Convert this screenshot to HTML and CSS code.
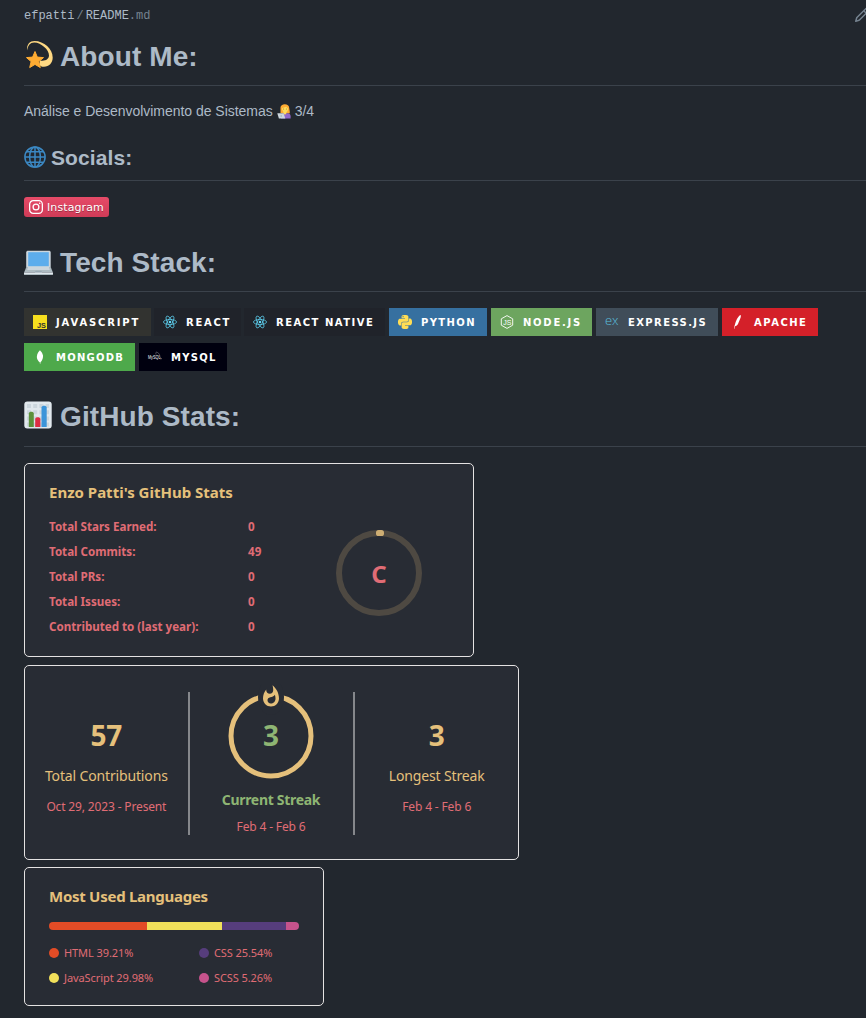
FILE: index.html
```html
<!DOCTYPE html>
<html lang="pt-BR">
<head>
<meta charset="utf-8">
<title>efpatti/README.md</title>
<link rel="stylesheet" href="styles.css">
</head>
<body>
<main class="readme">
  <header class="file-bar">
    <div class="file-path"><span>efpatti</span><span class="slash">/</span><span>README</span><span class="ext">.md</span></div>
    <svg class="edit-icon" width="16" height="16" viewBox="0 0 16 16"><path d="M11.013 1.427a1.75 1.75 0 0 1 2.474 0l1.086 1.086a1.75 1.75 0 0 1 0 2.474l-8.61 8.61c-.21.21-.47.364-.756.445l-3.251.93a.75.75 0 0 1-.927-.928l.929-3.25c.081-.286.235-.547.445-.758l8.61-8.61Zm.176 4.823L9.75 4.81l-6.286 6.287a.253.253 0 0 0-.064.108l-.558 1.953 1.953-.558a.253.253 0 0 0 .108-.064Zm1.238-3.763a.25.25 0 0 0-.354 0L10.811 3.75l1.439 1.44 1.263-1.263a.25.25 0 0 0 0-.354Z"/></svg>
  </header>

  <h1 class="title title-about">
    <svg class="emoji" width="29" height="29" viewBox="0 0 29 29">
      <path fill="#ffd983" d="M3 10.5C2.600 4 6 1 10.500 1C20 1 28.700 9 28.700 17.500C28.700 23 25 26.800 20 26.800C17.500 26.800 16 25.900 15.500 24.500L16 20.400C21 21.400 24.800 19.500 25 15.500C25.200 9.500 17 2.600 10.500 2.400C6 2.300 4.200 5 3 10.500Z"/>
      <path fill="#ffac33" stroke="#ffac33" stroke-width="1" stroke-linejoin="round" d="M11 11.500l2.300 5.600 6.200.5-4.700 4 1.500 6-5.300-3.200-5.300 3.200 1.400-6-4.600-4 6.100-.5z"/>
    </svg>
    <span>About Me:</span>
  </h1>
  <p class="intro"><span>Análise e Desenvolvimento de Sistemas</span>
    <svg class="intro-emoji" width="14" height="15" viewBox="0 0 14 15">
      <path fill="#ffac33" d="M3.500 9V3.600C3.500 1.500 5.400.2 7.800.2s4.400 1.400 4.400 3.600c0 2 1.100 3.600.4 5.700z"/>
      <path fill="#9268ca" d="M4 14.500v-2.300c0-1.900 1.400-3 3.400-3h3c2 0 3.200 1.100 3.200 3v2.300z"/>
      <path fill="#ffdc5d" d="M6.400 7.200h3v2.300c-.7 1.200-2.300 1.200-3 0z"/>
      <path fill="#ffdc5d" d="M5 4.300l4.100-1.500 2 1.800c0 2.400-1.400 4-3 4S5 6.700 5 4.300z"/>
      <circle cx="6.700" cy="5" r=".4" fill="#664500"/><circle cx="9.300" cy="5" r=".4" fill="#664500"/>
      <path fill="#ccd6dd" d="M.3 9.300h6.200l1.800 5.200H1.900z"/><circle cx="4.200" cy="12" r=".8" fill="#99aab5"/>
    </svg>
    <span>3/4</span>
  </p>

  <h2 class="title subtitle">
    <svg class="emoji" width="22" height="22" viewBox="0 0 22 22" fill="none" stroke="#3b88c3" stroke-width="1.500">
      <circle cx="11" cy="11" r="10.100"/><ellipse cx="11" cy="11" rx="5.400" ry="10"/>
      <path d="M11 1v20M1 11h20M3 5.700h16M3 16.300h16"/>
    </svg>
    <span>Socials:</span>
  </h2>
  <a class="social-badge">
    <svg width="14" height="14" viewBox="0 0 14 14" fill="none" stroke="#fff" stroke-width="1.300"><rect x=".65" y=".65" width="12.700" height="12.700" rx="3.600"/><circle cx="7" cy="7" r="2.900"/><circle cx="10.700" cy="3.300" r=".8" fill="#fff" stroke="none"/></svg>
    <span>Instagram</span>
  </a>

  <h1 class="title title-tech">
    <svg class="emoji" width="29" height="26" viewBox="0 0 29 26">
      <path fill="#ccd6dd" d="M2.200 2.500C2.200 1.300 3 .7 4 .7h21c1 0 1.700.6 1.700 1.800V17H2.200z"/>
      <path fill="#5dadec" d="M4.200 2.200h20.600v14H4.200z"/>
      <path fill="#aebbc1" d="M2.300 17h24.400l2.200 5.500H.1z"/>
      <path fill="#ccd6dd" d="M4 17h21l.8 3H3.200z"/>
      <path fill="#9aaab4" d="M11.500 20.700h6l.6 2h-7.200z"/>
      <path fill="#e1e8ed" d="M0 22.500h29v1.200c0 .8-.6 1.300-1.400 1.300H1.400C.6 25 0 24.500 0 23.700z"/>
      <path fill="#aebbc1" d="M.2 24h28.600c-.2.700-.7 1-1.400 1H1.600c-.7 0-1.200-.3-1.400-1z"/>
    </svg>
    <span>Tech Stack:</span>
  </h1>
  <div class="badges">
    <span class="badge js"><svg width="14" height="14" viewBox="0 0 14 14"><path fill="#f7df1e" d="M0 0h14v14H0z"/><text class="js-mark" x="3.900" y="13" textLength="9" lengthAdjust="spacingAndGlyphs">JS</text></svg><b>JAVASCRIPT</b></span>
    <span class="badge react"><svg width="14" height="14" viewBox="0 0 24 24" fill="none" stroke="#61dafb" stroke-width="1.200"><g id="atom"><ellipse cx="12" cy="12" rx="11.300" ry="4.300"/><ellipse cx="12" cy="12" rx="11.300" ry="4.300" transform="rotate(60 12 12)"/><ellipse cx="12" cy="12" rx="11.300" ry="4.300" transform="rotate(120 12 12)"/><circle cx="12" cy="12" r="2.200" fill="#61dafb" stroke="none"/></g></svg><b>REACT</b></span>
    <span class="badge native"><svg width="14" height="14" viewBox="0 0 24 24" fill="none" stroke="#61dafb" stroke-width="1.200"><use href="#atom"/></svg><b>REACT NATIVE</b></span>
    <span class="badge python"><svg width="14" height="14" viewBox="0 0 24 24"><path fill="#ffdd54" d="M14.250.18l.9.2.73.26.59.3.45.32.34.34.25.34.16.33.1.3.04.26.02.2-.01.13V8.500l-.05.63-.13.55-.21.46-.26.38-.3.31-.33.25-.35.19-.35.14-.33.1-.3.07-.26.04-.21.02H8.770l-.69.05-.59.14-.5.22-.41.27-.33.32-.27.35-.2.36-.15.37-.1.35-.07.32-.04.27-.02.21v3.060H3.170l-.21-.03-.28-.07-.32-.12-.35-.18-.36-.26-.36-.36-.35-.46-.32-.59-.28-.73-.21-.88-.14-1.050-.05-1.230.06-1.220.16-1.040.24-.87.32-.71.36-.57.4-.44.42-.33.42-.24.4-.16.36-.1.32-.05.24-.01h.16l.06.01h8.160v-.83H6.180l-.01-2.750-.02-.37.05-.34.11-.31.17-.28.25-.26.31-.23.38-.2.44-.18.51-.15.58-.12.64-.1.71-.06.77-.04.84-.02 1.270.05zm-6.300 1.980l-.23.33-.08.41.08.41.23.34.33.22.41.09.41-.09.33-.22.23-.34.08-.41-.08-.41-.23-.33-.33-.22-.41-.09-.41.09zm13.090 3.950l.28.06.32.12.35.18.36.27.36.35.35.47.32.59.28.73.21.88.14 1.040.05 1.230-.06 1.230-.16 1.040-.24.86-.32.71-.36.57-.4.45-.42.33-.42.24-.4.16-.36.09-.32.05-.24.02-.16-.01h-8.220v.82h5.840l.01 2.760.02.36-.05.34-.11.31-.17.29-.25.25-.31.24-.38.2-.44.17-.51.15-.58.13-.64.09-.71.07-.77.04-.84.01-1.270-.04-1.070-.14-.9-.2-.73-.25-.59-.3-.45-.33-.34-.34-.25-.34-.16-.33-.1-.3-.04-.25-.02-.2.01-.13v-5.340l.05-.64.13-.54.21-.46.26-.38.3-.32.33-.24.35-.2.35-.14.33-.1.3-.06.26-.04.21-.02.13-.01h5.840l.69-.05.59-.14.5-.21.41-.28.33-.32.27-.35.2-.36.15-.36.1-.35.07-.32.04-.28.02-.21V6.070h2.090l.14.01z"/></svg><b>PYTHON</b></span>
    <span class="badge node"><svg width="14" height="14" viewBox="0 0 14 14"><path fill="none" stroke="#fff" stroke-width=".9" stroke-linejoin="round" d="M7 .6l5.700 3.200v6.400L7 13.400 1.300 10.200V3.800z"/><text class="node-mark" x="3.300" y="9.800">JS</text></svg><b>NODE.JS</b></span>
    <span class="badge express"><svg width="15" height="14" viewBox="0 0 15 14"><text class="ex-mark" x="0" y="10.500" textLength="14.500" lengthAdjust="spacingAndGlyphs">ex</text></svg><b>EXPRESS.JS</b></span>
    <span class="badge apache"><svg width="14" height="14" viewBox="0 0 14 14"><path fill="#fff" d="M9.800.1C7.800.5 5.700 4 4.300 8.300L3.500 11l-.4 2.900.4-.1.600-2.600c2-.3 2.700-1.400 3.500-3.600.8-2.500 2.700-5 2.200-7.500z"/></svg><b>APACHE</b></span>
    <span class="badge mongo"><svg width="14" height="14" viewBox="0 0 24 24"><path fill="#fff" d="M17.193 9.555c-1.264-5.580-4.252-7.414-4.573-8.115-.28-.394-.53-.954-.735-1.440-.036.495-.055.685-.523 1.184-.723.566-4.438 3.682-4.740 10.020-.282 5.912 4.270 9.435 4.888 9.884l.07.05A73.490 73.490 0 0 1 11.910 24h.481c.114-1.032.284-2.056.51-3.070.417-.296 4.488-3.300 4.292-11.375z"/></svg><b>MONGODB</b></span>
    <span class="badge mysql"><svg width="14" height="14" viewBox="0 0 14 14"><text class="mysql-mark" x="0" y="9.300" textLength="12.500" lengthAdjust="spacingAndGlyphs">MySQL</text><path fill="none" stroke="#fff" stroke-width=".45" opacity=".6" d="M8 4.500C7.500 2.500 8 1.500 9.500 2.500c2 1 2.300 2.800 2.500 4.500l1.700 1.800-1.500.2"/></svg><b>MYSQL</b></span>
  </div>

  <h1 class="title title-stats">
    <svg class="emoji" width="28" height="28" viewBox="0 0 28 28">
      <rect x=".3" y=".5" width="27.400" height="27" rx="3" fill="#e1e8ed"/>
      <path stroke="#ccd6dd" stroke-width="4" stroke-dasharray="4 2.200" d="M3 5h22M3 11.200h22M3 17.400h22M3 23.500h22"/>
      <path fill="#5c913b" d="M4.800 26V12.500c0-2.500 5-2.500 5 0V26z"/>
      <path fill="#dd2e44" d="M11.200 26v-8c0-2.500 5.200-2.500 5.200 0v8z"/>
      <path fill="#3b94d9" d="M17.500 26V6.500c0-2.500 5.200-2.500 5.200 0V26z"/>
    </svg>
    <span>GitHub Stats:</span>
  </h1>

  <section class="card stats-card">
    <h3 class="card-title">Enzo Patti's GitHub Stats</h3>
    <div class="stats-body">
      <dl class="stats-list">
        <dt>Total Stars Earned:</dt><dd>0</dd>
        <dt>Total Commits:</dt><dd>49</dd>
        <dt>Total PRs:</dt><dd>0</dd>
        <dt>Total Issues:</dt><dd>0</dd>
        <dt>Contributed to (last year):</dt><dd>0</dd>
      </dl>
      <svg class="rank" width="86" height="86" viewBox="0 0 86 86">
        <circle cx="43" cy="43" r="40" fill="none" stroke="#e5c07b" stroke-width="6" opacity=".2"/>
        <rect x="40" y="0" width="8" height="6" rx="2.600" fill="#e5c07b" opacity=".85"/>
        <text class="rank-letter" x="43" y="53">C</text>
      </svg>
    </div>
  </section>

  <section class="card streak-card">
    <div class="streak-col">
      <strong class="big">57</strong><span class="label">Total Contributions</span><span class="date">Oct 29, 2023 - Present</span>
    </div>
    <div class="streak-col current">
      <svg class="ring" width="90" height="96" viewBox="0 0 90 96">
        <circle cx="45" cy="52" r="40" fill="none" stroke="#e5c07b" stroke-width="5"/>
        <ellipse cx="45" cy="13" rx="13" ry="18" fill="#282c34"/>
        <path fill="#e5c07b" fill-rule="evenodd" transform="translate(45 .5)" d="M1.500.67C1.500.67 2.240 3.320 2.240 5.470C2.240 7.530.89 9.200-1.170 9.200C-3.230 9.200-4.790 7.530-4.790 5.470L-4.760 5.110C-6.780 7.510-8 10.620-8 13.990C-8 18.410-4.420 22 0 22C4.420 22 8 18.410 8 13.990C8 8.600 5.410 3.790 1.500.67ZM-.29 19C-2.070 19-3.510 17.600-3.510 15.860C-3.510 14.240-2.460 13.100-.7 12.740C1.070 12.380 2.900 11.530 3.920 10.160C4.310 11.450 4.510 12.810 4.510 14.200C4.510 16.850 2.360 19-.29 19Z"/>
        <text class="ring-number" x="45" y="62">3</text>
      </svg>
      <strong class="current-label">Current Streak</strong><span class="date">Feb 4 - Feb 6</span>
    </div>
    <div class="streak-col">
      <strong class="big">3</strong><span class="label">Longest Streak</span><span class="date">Feb 4 - Feb 6</span>
    </div>
  </section>

  <section class="card lang-card">
    <h3 class="card-title lang-title">Most Used Languages</h3>
    <div class="lang-bar"><i class="html" style="width:39.210%"></i><i class="jscript" style="width:29.980%"></i><i class="css" style="width:25.540%"></i><i class="scss" style="width:5.270%"></i></div>
    <ul class="legend">
      <li><i class="html"></i>HTML 39.21%</li><li><i class="css"></i>CSS 25.54%</li>
      <li><i class="jscript"></i>JavaScript 29.98%</li><li><i class="scss"></i>SCSS 5.26%</li>
    </ul>
  </section>
</main>
</body>
</html>
```
FILE: styles.css
```css
* { box-sizing: border-box; }
html { overflow: hidden; }
body { margin: 0; background: #22272e; color: #adbac7; font: 14px/21px "Liberation Sans", Arial, sans-serif; }
.readme { height: 1018px; padding: 7px 0 0 24px; overflow: hidden; }
h1, h2, h3, p, ul, dl, dd { margin: 0; padding: 0; }

.file-bar { display: flex; justify-content: space-between; height: 35px; margin-right: -4px; }
.file-path { font: 12px/19px "Liberation Mono", monospace; }
.slash { padding: 0 2px; color: #768390; }
.ext { color: #768390; }
.edit-icon { flex: none; fill: #768390; }

.title { display: flex; align-items: flex-start; height: 44px; border-bottom: 1px solid #3b424b; font-size: 28px; line-height: 30px; font-weight: bold; letter-spacing: .1px; white-space: nowrap; }
.emoji { flex: none; }
.title-about .emoji { margin: -2px 7px 0 0; }
.title-tech .emoji { margin: 2px 7px 0 0; }
.title-stats { line-height: 28px; }
.title-stats .emoji { margin: -2px 8px 0 0; }
.intro { display: flex; align-items: flex-start; margin-top: 15px; letter-spacing: -.03px; }
.intro-emoji { margin: 3px 4px 0; }
.subtitle { height: 34px; margin-top: 25px; font-size: 21px; line-height: 21px; }
.subtitle .emoji { margin: -1px 5px 0 0; }

.social-badge { display: flex; align-items: center; gap: 4px; width: 85px; height: 20px; margin-top: 16px; padding-left: 5px; border-radius: 3px; background: linear-gradient(#e64b68, #cf3b57); color: #fff; font: 11px/20px "DejaVu Sans", sans-serif; letter-spacing: .1px; text-shadow: 0 1px 0 rgba(1, 1, 1, .3); }
.social-badge span { padding-top: 1px; }

.title-tech { margin-top: 31px; }
.badges { display: flex; flex-wrap: wrap; gap: 7px 4px; width: 810px; margin-top: 16px; }
.badge { display: flex; align-items: center; height: 28px; padding-left: 9px; color: #fff; letter-spacing: 1.75px; }
.badge svg { flex: none; width: 14px; margin-right: 9px; overflow: visible; letter-spacing: 0; }
.badge b { padding-top: 2px; font: bold 10px/26px "DejaVu Sans", sans-serif; white-space: nowrap; }
.js { width: 127px; background: #323330; letter-spacing: 1.85px; }
.react { width: 87px; margin: 0 -1px; background: #20232a; }
.native { width: 141px; background: #20232a; letter-spacing: 1.5px; }
.python { width: 98px; background: #3670a0; letter-spacing: 1.4px; }
.node { width: 101px; background: #6da55f; }
.express { width: 122px; background: #404d59; letter-spacing: 1.4px; }
.apache { width: 96px; background: #d42029; letter-spacing: 1.5px; }
.mongo { width: 111px; background: #4ea94b; letter-spacing: 1.25px; }
.mysql { width: 88px; background: #00000f; letter-spacing: 1.25px; }
.js-mark { font: bold 8px "Liberation Sans", sans-serif; fill: #323330; }
.node-mark { font: 7px "Liberation Sans", sans-serif; fill: #fff; }
.ex-mark { font: 300 14px "Open Sans", sans-serif; fill: #61dafb; opacity: .8; }
.mysql-mark { font: 4.5px "Liberation Sans", sans-serif; fill: #fff; }

.title-stats { margin-top: 32px; }
.card { border: 1px solid #e4e2e2; border-radius: 5px; background: #282c34; color: #e06c75; font-family: "Noto Sans", sans-serif; }
.card-title { color: #e5c07b; font-size: 15px; line-height: 20px; font-weight: 700; }
.stats-card { width: 450px; height: 194px; margin-top: 16px; padding: 18px 24px; }
.stats-body { display: flex; }
.stats-list { display: grid; grid-template-columns: 199px 88px; grid-auto-rows: 25px; margin-top: 12px; font-size: 11.6px; line-height: 25px; font-weight: 700; }
.rank { margin-top: 28px; }
.rank-letter { font: bold 24px "Noto Sans", sans-serif; fill: #e06c75; text-anchor: middle; }

.streak-card { display: flex; width: 495px; height: 195px; margin-top: 8px; padding: 26px 0 24px; }
.streak-col { display: flex; flex-direction: column; align-items: center; flex: 1; padding-top: 26px; letter-spacing: -.15px; white-space: nowrap; }
.streak-col + .streak-col { border-left: 2px solid #85878b; }
.big { color: #e5c07b; font-size: 28px; line-height: 34px; }
.label { margin-top: 14px; color: #e5c07b; font-size: 14px; line-height: 20px; }
.date { margin-top: 13px; font-size: 12px; line-height: 16px; }
.streak-col.current { padding: 0 1px 0 0; }
.ring { margin-top: -8px; }
.ring-number { font: bold 28px "Noto Sans", sans-serif; fill: #8eb573; text-anchor: middle; }
.current-label { margin-top: 10px; color: #8eb573; font-size: 14px; line-height: 20px; letter-spacing: -.3px; }
.current .date { margin-top: 9px; }

.lang-card { width: 300px; height: 139px; margin-top: 7px; padding: 18px 24px; }
.lang-title { letter-spacing: -.27px; }
.lang-bar { display: flex; height: 8px; margin-top: 16px; border-radius: 4px; overflow: hidden; }
.html { background: #e34c26; }
.jscript { background: #f1e05a; }
.css { background: #563d7c; }
.scss { background: #c6538c; }
.legend { display: grid; grid-template-columns: 150px 100px; margin-top: 10px; list-style: none; font-size: 11px; line-height: 25px; letter-spacing: -.08px; }
.legend li { display: flex; align-items: center; gap: 5px; white-space: nowrap; }
.legend i { width: 10px; height: 10px; border-radius: 50%; }
```
